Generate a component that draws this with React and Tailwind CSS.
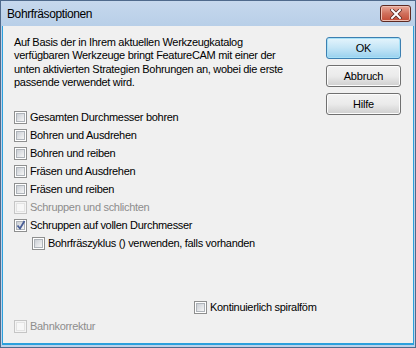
import React from "react";

const FONT = { fontFamily: '"Liberation Sans", Arial, sans-serif' };

function Box({ checked, disabled }) {
  return (
    <div
      className={`w-[13px] h-[13px] shrink-0 border flex items-center justify-center ${
        disabled ? "border-[#c5c5c5] bg-[#f4f4f4]" : "border-[#8e8f8f] bg-white"
      }`}
    >
      <div
        className={`w-[9px] h-[9px] border relative ${
          disabled
            ? "border-[#e3e3e3] bg-[#f7f7f7]"
            : "border-[#aeb3b9] bg-gradient-to-br from-[#cbcfd5] to-[#f6f6f6]"
        }`}
      >
        {checked && (
          <svg
            className="absolute left-[-1px] top-[-2px]"
            width="10"
            height="11"
            viewBox="0 0 10 11"
          >
            <path
              d="M1.5 5.5 L4 8.5 L8.5 1"
              fill="none"
              stroke="#4a5f97"
              strokeWidth="1.8"
            />
          </svg>
        )}
      </div>
    </div>
  );
}

function Check({ label, checked, disabled, className = "" }) {
  return (
    <div className={`flex items-center h-[18px] gap-[3px] ${className}`}>
      <Box checked={checked} disabled={disabled} />
      <span
        className={`text-[11px] tracking-[-0.3px] leading-none whitespace-nowrap ${
          disabled ? "text-[#8d8d8d]" : "text-black"
        }`}
      >
        {label}
      </span>
    </div>
  );
}

function Button({ children, primary }) {
  return (
    <div
      className={`h-[22px] w-[75px] rounded-[3px] border flex items-center justify-center text-[11px] tracking-[-0.2px] text-black ${
        primary
          ? "border-[#3c7fb1] bg-gradient-to-b from-[#e5f4fc] via-[#c4e5f6] to-[#98d1ef] shadow-[inset_0_0_0_1px_#a7e1f7]"
          : "border-[#707070] bg-gradient-to-b from-[#f2f2f2] via-[#ebebeb] to-[#cfcfcf] shadow-[inset_0_0_0_1px_#fcfcfc]"
      }`}
    >
      {children}
    </div>
  );
}

export default function App() {
  return (
    <div
      className="w-[416px] h-[348px] flex flex-col bg-[#bcd2ea] border border-[#4f6a8c] overflow-hidden"
      style={FONT}
    >
      {/* title bar */}
      <div className="h-[25px] shrink-0 flex items-center justify-between pl-[6px] pr-[4px] bg-gradient-to-b from-[#c6d8ed] to-[#b8cfe8]">
        <span className="text-[12px] tracking-[-0.4px] text-black">
          Bohrfräsoptionen
        </span>
        <div className="w-[31px] h-[17px] rounded-[3px] border border-[#5e2a22] bg-gradient-to-b from-[#e9a899] via-[#d0705c] to-[#c24a34] flex items-center justify-center shadow-[inset_0_0_0_1px_#eec0b4]">
          <svg width="12" height="10" viewBox="0 0 12 10">
            <path
              d="M2 1 L10 9 M10 1 L2 9"
              stroke="#5a2a22"
              strokeWidth="3.6"
              strokeLinecap="square"
            />
            <path
              d="M2 1 L10 9 M10 1 L2 9"
              stroke="#ffffff"
              strokeWidth="2"
              strokeLinecap="square"
            />
          </svg>
        </div>
      </div>

      {/* client */}
      <div className="flex-1 mx-[1px] mb-[2px] border-b-[2px] border-x border-[#2ba0dc] bg-[#f0f0f0] flex pt-[10px] pl-[11px] pr-[12px]">
        <div className="flex-1 flex flex-col">
          <p className="text-[11px] tracking-[-0.3px] leading-[13.33px] text-black whitespace-nowrap">
            Auf Basis der in Ihrem aktuellen Werkzeugkatalog
            <br />
            verfügbaren Werkzeuge bringt FeatureCAM mit einer der
            <br />
            unten aktivierten Strategien Bohrungen an, wobei die erste
            <br />
            passende verwendet wird.
          </p>
          <div className="mt-[19px] flex flex-col">
            <Check label="Gesamten Durchmesser bohren" />
            <Check label="Bohren und Ausdrehen" />
            <Check label="Bohren und reiben" />
            <Check label="Fräsen und Ausdrehen" />
            <Check label="Fräsen und reiben" />
            <Check label="Schruppen und schlichten" disabled />
            <Check label="Schruppen auf vollen Durchmesser" checked />
            <Check
              label="Bohrfräszyklus () verwenden, falls vorhanden"
              className="pl-[18px]"
            />
          </div>
          <Check
            label="Kontinuierlich spiralföm"
            className="mt-[46px] pl-[180px]"
          />
          <Check label="Bahnkorrektur" disabled className="mt-px" />
        </div>
        <div className="flex flex-col gap-[6px] pt-px">
          <Button primary>OK</Button>
          <Button>Abbruch</Button>
          <Button>Hilfe</Button>
        </div>
      </div>
    </div>
  );
}
